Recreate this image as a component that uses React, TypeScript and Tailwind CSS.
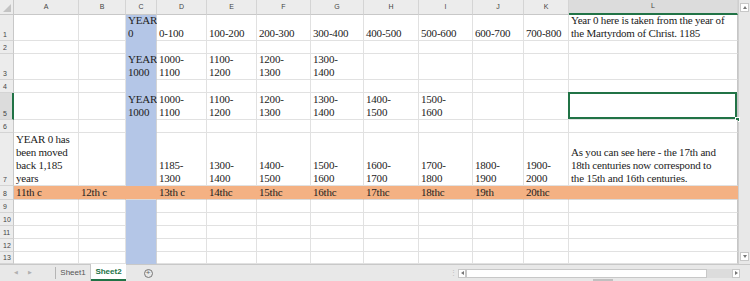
import React from "react";

const COLS = ["A", "B", "C", "D", "E", "F", "G", "H", "I", "J", "K", "L"];
const COLW = [65, 47, 31, 50, 50, 54, 53, 55, 54, 51, 45, 169];
const ROWH = [26, 13, 26, 13, 27, 13, 53, 14, 13, 13, 13, 13, 12];

type Cell = string[] | undefined;
const data: Record<string, string[]> = {
  C1: ["YEAR", "0"],
  D1: ["0-100"],
  E1: ["100-200"],
  F1: ["200-300"],
  G1: ["300-400"],
  H1: ["400-500"],
  I1: ["500-600"],
  J1: ["600-700"],
  K1: ["700-800"],
  L1: ["Year 0 here is taken from the year of", "the Martyrdom of Christ. 1185"],
  C3: ["YEAR", "1000"],
  D3: ["1000-", "1100"],
  E3: ["1100-", "1200"],
  F3: ["1200-", "1300"],
  G3: ["1300-", "1400"],
  C5: ["YEAR", "1000"],
  D5: ["1000-", "1100"],
  E5: ["1100-", "1200"],
  F5: ["1200-", "1300"],
  G5: ["1300-", "1400"],
  H5: ["1400-", "1500"],
  I5: ["1500-", "1600"],
  A7: ["YEAR 0 has", "been moved", "back 1,185", "years"],
  D7: ["1185-", "1300"],
  E7: ["1300-", "1400"],
  F7: ["1400-", "1500"],
  G7: ["1500-", "1600"],
  H7: ["1600-", "1700"],
  I7: ["1700-", "1800"],
  J7: ["1800-", "1900"],
  K7: ["1900-", "2000"],
  L7: ["As you can see here - the 17th and", "18th centuries now correspond to", "the 15th and 16th centuries."],
  A8: ["11th c"],
  B8: ["12th c"],
  D8: ["13th c"],
  E8: ["14thc"],
  F8: ["15thc"],
  G8: ["16thc"],
  H8: ["17thc"],
  I8: ["18thc"],
  J8: ["19th"],
  K8: ["20thc"],
};

function CellBox({ col, row }: { col: string; row: number }) {
  const lines: Cell = data[col + row];
  const isOrange = row === 8;
  const isBlue = col === "C" && !isOrange;
  const selected = col === "L" && row === 5;
  let cls =
    "relative flex flex-col justify-end overflow-visible pl-[2px] border-b border-r ";
  if (isOrange) cls += "bg-[#f4b183] border-b-[#dadada] border-r-[#f4b183] ";
  else if (isBlue) cls += "bg-[#b4c6e7] border-b-[#b4c6e7] border-r-[#d4d4d4] ";
  else cls += "bg-white border-[#e1e1e1] ";
  if (col === "L") cls += "border-r-[#c6c6c6] ";
  return (
    <div className={cls}>
      {lines &&
        lines.map((l, i) => (
          <div
            key={i}
            className="whitespace-nowrap leading-[13px] h-[13px] text-[11px] tracking-[-0.2px] text-[#222]"
          >
            {l}
          </div>
        ))}
      {selected && (
        <>
          <div className="absolute left-[-1px] top-[-1px] right-[0px] bottom-[0px] border-2 border-[#217346]" />
          <div className="absolute right-[-3px] bottom-[-3px] w-[5px] h-[5px] bg-[#217346] border border-white" />
        </>
      )}
    </div>
  );
}

export default function App() {
  return (
    <div
      className="w-[750px] h-[281px] overflow-hidden bg-white flex flex-col"
      style={{ fontFamily: '"Liberation Serif", serif' }}
    >
      <div className="flex h-[264px]">
        <div
          className="grid w-[738px]"
          style={{
            gridTemplateColumns: `14px ${COLW.map((w) => w + "px").join(" ")}`,
            gridTemplateRows: `15px ${ROWH.map((h) => h + "px").join(" ")}`,
          }}
        >
          {/* corner */}
          <div className="relative bg-[#ececec] border-r border-b border-[#c8c8c8]">
            <div className="absolute right-[2px] bottom-[2px] w-0 h-0 border-l-[8px] border-l-transparent border-b-[8px] border-b-[#c3c3c3]" />
          </div>
          {COLS.map((c) => (
            <div
              key={c}
              className={
                "flex items-center justify-center border-r border-[#d4d4d4] text-[7px] text-[#444] " +
                (c === "L"
                  ? "border-b-2 border-b-[#217346] bg-[#dcdcdc]"
                  : "border-b border-b-[#c8c8c8] bg-[#ececec]")
              }
              style={{ fontFamily: '"Liberation Sans", sans-serif' }}
            >
              {c}
            </div>
          ))}
          {ROWH.map((_, ri) => {
            const r = ri + 1;
            return (
              <React.Fragment key={r}>
                <div
                  className={
                    "flex items-end pl-[3px] pb-[1px] border-b border-[#d4d4d4] text-[7px] leading-[9px] text-[#444] " +
                    (r === 5
                      ? "border-r-2 border-r-[#217346] bg-[#dcdcdc]"
                      : "border-r border-r-[#c8c8c8] bg-[#ececec]")
                  }
                  style={{ fontFamily: '"Liberation Sans", sans-serif' }}
                >
                  {r}
                </div>
                {COLS.map((c) => (
                  <CellBox key={c + r} col={c} row={r} />
                ))}
              </React.Fragment>
            );
          })}
        </div>
        {/* vertical scrollbar */}
        <div className="w-[12px] bg-[#e8e8e8] border-l border-[#cfcfcf] flex flex-col justify-between items-center py-[3px]">
          <div className="w-[9px] h-[9px] bg-white border border-[#c8c8c8] flex items-center justify-center">
            <div className="w-0 h-0 border-l-[2.5px] border-r-[2.5px] border-b-[3px] border-l-transparent border-r-transparent border-b-[#777]" />
          </div>
          <div className="w-[9px] h-[9px] bg-white border border-[#c8c8c8] flex items-center justify-center">
            <div className="w-0 h-0 border-l-[2.5px] border-r-[2.5px] border-t-[3px] border-l-transparent border-r-transparent border-t-[#777]" />
          </div>
        </div>
      </div>
      {/* tab bar */}
      <div
        className="relative h-[17px] bg-[#e8e8e8] border-t border-[#c8c8c8] flex items-stretch text-[8px]"
        style={{ fontFamily: '"Liberation Sans", sans-serif' }}
      >
        <div className="w-[55px] flex items-center gap-[10px] pl-[14px] text-[#b0b0b0] text-[5px]">
          <span>◀</span>
          <span>▶</span>
        </div>
        <div className="w-px bg-[#b5b5b5] my-[2px]" />
        <div className="w-[35px] flex items-center justify-center text-[#555] border-r border-[#c8c8c8]">
          Sheet1
        </div>
        <div className="w-[35px] flex items-center justify-center bg-white text-[#217346] font-bold border-b-2 border-[#217346] -mt-px">
          Sheet2
        </div>
        <div className="w-[44px] flex items-center justify-center">
          <div className="w-[9px] h-[9px] rounded-full border border-[#777] flex items-center justify-center text-[#666] text-[8px] leading-none">
            +
          </div>
        </div>
        <div className="flex-1" />
        <div className="w-[10px] flex items-center justify-center text-[#bbb] text-[7px]">⋮</div>
        <div className="flex items-center mr-[10px]">
          <div className="w-[8px] h-[9px] bg-white border border-[#c8c8c8] flex items-center justify-center">
            <div className="w-0 h-0 border-t-[2.5px] border-b-[2.5px] border-r-[3px] border-t-transparent border-b-transparent border-r-[#777]" />
          </div>
          <div className="w-[241px] h-[9px] bg-white border border-[#c8c8c8]" />
          <div className="w-[25px] h-[9px] bg-[#dcdcdc]" />
          <div className="w-[8px] h-[9px] bg-white border border-[#c8c8c8] flex items-center justify-center">
            <div className="w-0 h-0 border-t-[2.5px] border-b-[2.5px] border-l-[3px] border-t-transparent border-b-transparent border-l-[#777]" />
          </div>
        </div>
        <div className="absolute left-[593px] bottom-0 w-[20px] h-[2px] bg-[#c0c0c0]" />
      </div>
    </div>
  );
}
